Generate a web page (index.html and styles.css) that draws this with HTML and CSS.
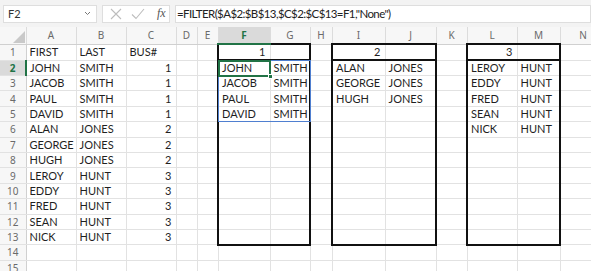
FILE: index.html
```html
<!DOCTYPE html>
<html lang="en">
<head>
    <meta charset="UTF-8">
    <title>Bus list - FILTER</title>
    <link rel="stylesheet" href="styles.css">
</head>
<body>
    <div class="app">
        <div class="formula-bar">
            <div class="name-box">
                <span>F2</span>
                <svg class="chev" width="7" height="5" viewBox="0 0 7 5"><path d="M1 1 L3.5 3.5 L6 1" fill="none" stroke="#777" stroke-width="1"/></svg>
            </div>
            <div class="tools">
                <svg width="12" height="12" viewBox="0 0 12 12"><path d="M1 1 L11 11 M11 1 L1 11" stroke="#bdbdbd" stroke-width="1.1"/></svg>
                <svg width="14" height="12" viewBox="0 0 14 12"><path d="M1 6.5 L5 10.5 L13 1" fill="none" stroke="#bdbdbd" stroke-width="1.1"/></svg>
                <span class="fx">fx</span>
            </div>
            <div class="formula">=FILTER($A$2:$B$13,$C$2:$C$13=F1,"None")</div>
        </div>

        <table class="sheet">
            <colgroup>
                <col style="width:26px"><col style="width:50px"><col style="width:50px"><col style="width:50px">
                <col style="width:21px"><col style="width:21px"><col style="width:52px"><col style="width:40px">
                <col style="width:22px"><col style="width:53px"><col style="width:51px"><col style="width:31px">
                <col style="width:50px"><col style="width:43px"><col style="width:46px">
            </colgroup>
            <thead>
                <tr>
                    <th class="corner"><svg width="12" height="12" viewBox="0 0 12 12"><path d="M12 0 L12 12 L0 12 Z" fill="#c9c9c9"/></svg></th>
                    <th>A</th><th>B</th><th>C</th><th>D</th><th>E</th>
                    <th class="active">F</th><th>G</th><th>H</th><th>I</th><th>J</th>
                    <th>K</th><th>L</th><th>M</th><th>N</th>
                </tr>
            </thead>
            <tbody>
                <tr>
                    <th>1</th><td>FIRST</td><td>LAST</td><td>BUS#</td><td></td><td></td>
                    <td class="num bl bt bb">1</td><td class="br bt bb"></td><td></td>
                    <td class="num bl bt bb">2</td><td class="br bt bb"></td><td></td>
                    <td class="num bl bt bb">3</td><td class="br bt bb"></td><td></td>
                </tr>
                <tr>
                    <th class="active">2</th><td>JOHN</td><td>SMITH</td><td class="num">1</td><td></td><td></td>
                    <td class="bl cell-sel">JOHN<div class="spill"></div><div class="cursor"><i></i></div></td><td class="br">SMITH</td><td></td>
                    <td class="bl">ALAN</td><td class="br">JONES</td><td></td>
                    <td class="bl">LEROY</td><td class="br">HUNT</td><td></td>
                </tr>
                <tr>
                    <th>3</th><td>JACOB</td><td>SMITH</td><td class="num">1</td><td></td><td></td>
                    <td class="bl">JACOB</td><td class="br">SMITH</td><td></td>
                    <td class="bl">GEORGE</td><td class="br">JONES</td><td></td>
                    <td class="bl">EDDY</td><td class="br">HUNT</td><td></td>
                </tr>
                <tr>
                    <th>4</th><td>PAUL</td><td>SMITH</td><td class="num">1</td><td></td><td></td>
                    <td class="bl">PAUL</td><td class="br">SMITH</td><td></td>
                    <td class="bl">HUGH</td><td class="br">JONES</td><td></td>
                    <td class="bl">FRED</td><td class="br">HUNT</td><td></td>
                </tr>
                <tr>
                    <th>5</th><td>DAVID</td><td>SMITH</td><td class="num">1</td><td></td><td></td>
                    <td class="bl">DAVID</td><td class="br">SMITH</td><td></td>
                    <td class="bl"></td><td class="br"></td><td></td>
                    <td class="bl">SEAN</td><td class="br">HUNT</td><td></td>
                </tr>
                <tr>
                    <th>6</th><td>ALAN</td><td>JONES</td><td class="num">2</td><td></td><td></td>
                    <td class="bl"></td><td class="br"></td><td></td>
                    <td class="bl"></td><td class="br"></td><td></td>
                    <td class="bl">NICK</td><td class="br">HUNT</td><td></td>
                </tr>
                <tr>
                    <th>7</th><td>GEORGE</td><td>JONES</td><td class="num">2</td><td></td><td></td>
                    <td class="bl"></td><td class="br"></td><td></td>
                    <td class="bl"></td><td class="br"></td><td></td>
                    <td class="bl"></td><td class="br"></td><td></td>
                </tr>
                <tr>
                    <th>8</th><td>HUGH</td><td>JONES</td><td class="num">2</td><td></td><td></td>
                    <td class="bl"></td><td class="br"></td><td></td>
                    <td class="bl"></td><td class="br"></td><td></td>
                    <td class="bl"></td><td class="br"></td><td></td>
                </tr>
                <tr>
                    <th>9</th><td>LEROY</td><td>HUNT</td><td class="num">3</td><td></td><td></td>
                    <td class="bl"></td><td class="br"></td><td></td>
                    <td class="bl"></td><td class="br"></td><td></td>
                    <td class="bl"></td><td class="br"></td><td></td>
                </tr>
                <tr>
                    <th>10</th><td>EDDY</td><td>HUNT</td><td class="num">3</td><td></td><td></td>
                    <td class="bl"></td><td class="br"></td><td></td>
                    <td class="bl"></td><td class="br"></td><td></td>
                    <td class="bl"></td><td class="br"></td><td></td>
                </tr>
                <tr>
                    <th>11</th><td>FRED</td><td>HUNT</td><td class="num">3</td><td></td><td></td>
                    <td class="bl"></td><td class="br"></td><td></td>
                    <td class="bl"></td><td class="br"></td><td></td>
                    <td class="bl"></td><td class="br"></td><td></td>
                </tr>
                <tr>
                    <th>12</th><td>SEAN</td><td>HUNT</td><td class="num">3</td><td></td><td></td>
                    <td class="bl"></td><td class="br"></td><td></td>
                    <td class="bl"></td><td class="br"></td><td></td>
                    <td class="bl"></td><td class="br"></td><td></td>
                </tr>
                <tr>
                    <th>13</th><td>NICK</td><td>HUNT</td><td class="num">3</td><td></td><td></td>
                    <td class="bl bb"></td><td class="br bb"></td><td></td>
                    <td class="bl bb"></td><td class="br bb"></td><td></td>
                    <td class="bl bb"></td><td class="br bb"></td><td></td>
                </tr>
                <tr>
                    <th>14</th><td></td><td></td><td></td><td></td><td></td><td></td><td></td><td></td><td></td><td></td><td></td><td></td><td></td><td></td>
                </tr>
                <tr>
                    <th>15</th><td></td><td></td><td></td><td></td><td></td><td></td><td></td><td></td><td></td><td></td><td></td><td></td><td></td><td></td>
                </tr>
            </tbody>
        </table>
    </div>
</body>
</html>
```

FILE: styles.css
```css
* {
    margin: 0;
    padding: 0;
    box-sizing: border-box;
}
body {
    background: #fff;
    font-family: Lato, "Open Sans", sans-serif;
    color: #1f1f1f;
    overflow: hidden;
}
.app {
    width: 591px;
    height: 271px;
    overflow: hidden;
}

/* formula bar */
.formula-bar {
    display: flex;
    align-items: center;
    gap: 5px;
    height: 27px;
    padding-left: 3px;
    background: #f3f3f3;
}
.name-box, .tools, .formula {
    height: 18px;
    background: #fff;
    border: 1px solid #dedede;
    display: flex;
    align-items: center;
}
.name-box {
    width: 94px;
    justify-content: space-between;
    padding: 0 5px 0 4px;
    font-size: 11px;
    color: #333;
}
.tools {
    width: 68px;
    gap: 9px;
    padding-left: 7px;
}
.fx {
    font-family: "Liberation Serif", serif;
    font-style: italic;
    font-size: 12px;
    color: #555;
    margin-left: 3px;
}
.formula {
    flex: 1;
    padding-left: 1px;
    font-size: 11.5px;
    letter-spacing: -0.6px;
    color: #222;
    white-space: nowrap;
}

/* sheet grid */
.sheet {
    table-layout: fixed;
    border-collapse: collapse;
    width: 586px;
    font-size: 11px;
}
.sheet thead th {
    height: 17px;
    background: #f7f7f7;
    border-right: 1px solid #dcdcdc;
    border-bottom: 1px solid #d0d0d0;
    font-family: "Noto Sans", sans-serif;
    font-weight: normal;
    font-size: 10px;
    color: #6a6a6a;
    text-align: center;
}
.sheet thead th.active {
    background: #dadada;
    color: #217346;
    font-weight: bold;
    border-bottom: 2px solid #217346;
}
.sheet th.corner {
    text-align: right;
    vertical-align: bottom;
    padding: 0 1px 1px 0;
    line-height: 0;
}
.sheet tbody tr {
    height: 15.4px;
}
.sheet tbody th {
    background: #f7f7f7;
    border-right: 1px solid #d0d0d0;
    border-bottom: 1px solid #e2e2e2;
    font-family: "Noto Sans", sans-serif;
    font-weight: normal;
    font-size: 10px;
    color: #6a6a6a;
    text-align: center;
}
.sheet tbody th.active {
    background: #dadada;
    color: #217346;
    font-weight: bold;
    border-right: 2px solid #217346;
}
.sheet td {
    border-right: 1px solid #e2e2e2;
    border-bottom: 1px solid #e2e2e2;
    padding: 0 3px;
    white-space: nowrap;
    overflow: visible;
    line-height: 14px;
}
.sheet td.num {
    text-align: right;
    padding-right: 4px;
}

/* thick box borders */
.bl { border-left: 2px solid #111 !important; }
.br { border-right: 2px solid #111 !important; }
.bt { border-top: 2px solid #111 !important; }
.bb { border-bottom: 2px solid #111 !important; }

/* selection */
.cell-sel {
    position: relative;
}
.spill {
    position: absolute;
    top: -1px;
    left: -1px;
    width: 93px;
    height: 62px;
    border: 1px solid #4f7fd0;
}
.cursor {
    position: absolute;
    top: -1px;
    left: -1px;
    width: 53px;
    height: 17px;
    border: 2px solid #217346;
}
.cursor i {
    position: absolute;
    right: -4px;
    bottom: -4px;
    width: 5px;
    height: 5px;
    background: #217346;
    border: 1px solid #fff;
}
```
